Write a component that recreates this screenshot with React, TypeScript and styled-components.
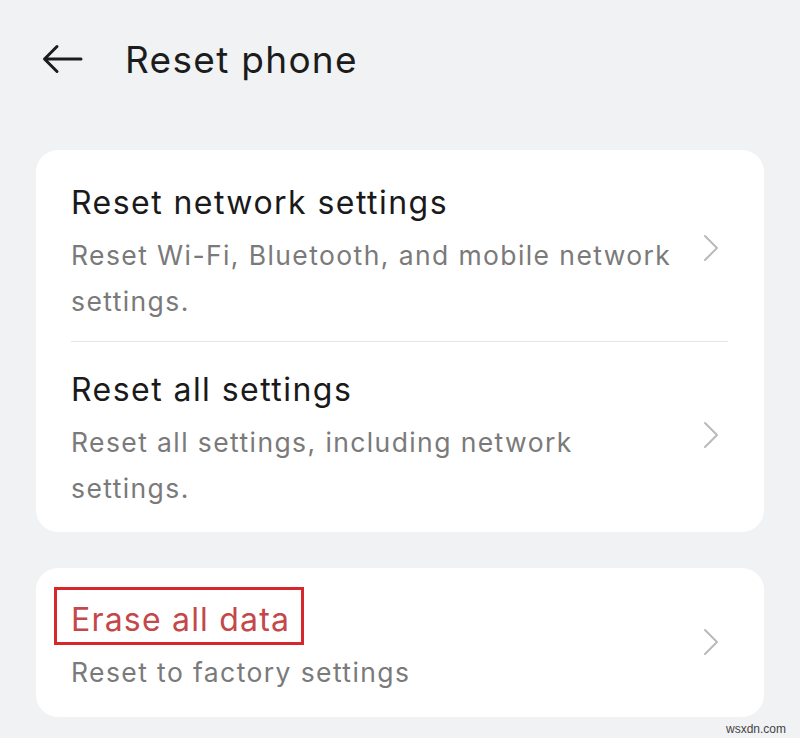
import React from "react";
import styled, { createGlobalStyle } from "styled-components";

const Global = createGlobalStyle`
  html, body { margin: 0; padding: 0; background: #f1f2f4; }
  body { font-family: Inter, "Noto Sans", "Liberation Sans", sans-serif; }
`;

const Page = styled.div`
  position: relative;
  width: 800px;
  height: 738px;
  background: #f1f2f4;
  display: flex;
  flex-direction: column;
  box-sizing: border-box;
  overflow: hidden;
`;

const Header = styled.header`
  height: 118px;
  display: flex;
  align-items: center;
  padding-left: 42px;
  gap: 42px;
  box-sizing: border-box;
`;

const BackButton = styled.button`
  border: 0;
  background: none;
  padding: 0;
  width: 41px;
  height: 30px;
  display: flex;
  align-items: center;
  justify-content: center;
  color: #1c1c1c;
`;

const Title = styled.h1`
  margin: 0;
  font-size: 37px;
  font-weight: 400;
  color: #1c1c1c;
  letter-spacing: 1.3px;
`;

const Card = styled.section<{ $top: number }>`
  margin: ${(p) => p.$top}px 36px 0;
  background: #ffffff;
  border-radius: 22px;
  padding: 4px 36px 4px 35px;
`;

const Item = styled.div<{ $pt: number; $pb: number }>`
  display: flex;
  align-items: center;
  padding: ${(p) => p.$pt}px 0 ${(p) => p.$pb}px;
  gap: 20px;
`;

const Texts = styled.div`
  flex: 1;
  max-width: 612px;
  display: flex;
  flex-direction: column;
  align-items: flex-start;
`;

const ItemTitle = styled.div<{ $danger?: boolean }>`
  font-size: 32px;
  line-height: 46px;
  letter-spacing: ${(p) => (p.$danger ? "1.2px" : "1.45px")};
  color: ${(p) => (p.$danger ? "#c4474a" : "#1a1a1a")};
  margin-bottom: 6px;
`;

const Marked = styled.span`
  position: relative;
  display: inline-block;
  &::after {
    content: "";
    position: absolute;
    left: -17px;
    right: -14px;
    top: -10px;
    bottom: -2px;
    border: 3px solid #d6272d;
  }
`;

const ItemSub = styled.div`
  font-size: 26.5px;
  line-height: 46px;
  letter-spacing: 1.4px;
  color: #7a7a7a;
`;

const Divider = styled.hr`
  margin: 0;
  border: 0;
  height: 1px;
  background: #e6e6e6;
`;

const ChevronBox = styled.span`
  display: flex;
  margin-left: auto;
  margin-right: 8px;
  margin-bottom: 8px;
`;

const Watermark = styled.div`
  position: absolute;
  right: 14px;
  bottom: 2px;
  font-family: "Liberation Sans", sans-serif;
  font-size: 12px;
  color: #444;
`;

const Chevron = () => (
  <ChevronBox>
    <svg width="18" height="28" viewBox="0 0 18 28" fill="none">
      <path d="M3 2 L15 14 L3 26" stroke="#bababa" strokeWidth="2" strokeLinecap="round" strokeLinejoin="round" />
    </svg>
  </ChevronBox>
);

const BackArrow = () => (
  <svg width="41" height="30" viewBox="0 0 41 30" fill="none">
    <path d="M39 15 H3 M15 2.5 L2.5 15 L15 27.5" stroke="#1c1c1c" strokeWidth="3" strokeLinecap="round" strokeLinejoin="round" />
  </svg>
);

export default function App() {
  return (
    <Page>
      <Global />
      <Header>
        <BackButton aria-label="Back">
          <BackArrow />
        </BackButton>
        <Title>Reset phone</Title>
      </Header>
      <Card $top={32}>
        <Item $pt={26} $pb={17}>
          <Texts>
            <ItemTitle>Reset network settings</ItemTitle>
            <ItemSub>Reset Wi-Fi, Bluetooth, and mobile network settings.</ItemSub>
          </Texts>
          <Chevron />
        </Item>
        <Divider />
        <Item $pt={25} $pb={17}>
          <Texts>
            <ItemTitle>Reset all settings</ItemTitle>
            <ItemSub>Reset all settings, including network settings.</ItemSub>
          </Texts>
          <Chevron />
        </Item>
      </Card>
      <Card $top={36}>
        <Item $pt={25} $pb={18}>
          <Texts>
            <ItemTitle $danger>
              <Marked>Erase all data</Marked>
            </ItemTitle>
            <ItemSub>Reset to factory settings</ItemSub>
          </Texts>
          <Chevron />
        </Item>
      </Card>
      <Watermark>wsxdn.com</Watermark>
    </Page>
  );
}
